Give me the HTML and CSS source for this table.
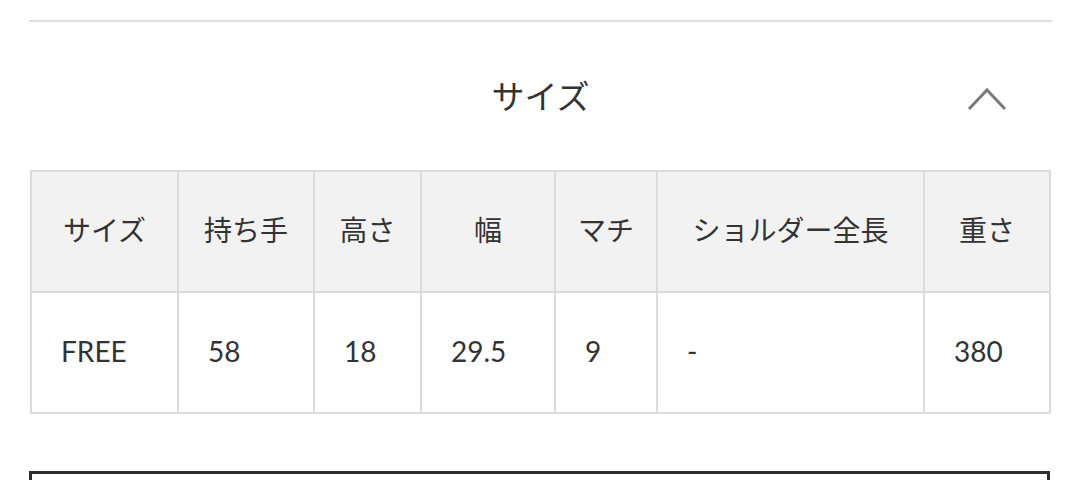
FILE: index.html
```html
<!DOCTYPE html>
<html lang="ja">
<head>
<meta charset="utf-8">
<link rel="stylesheet" href="styles.css">
</head>
<body>
<div class="page">
  <div class="rule"></div>
  <div class="acc-head">
    <span></span>
    <h2 class="acc-title">サイズ</h2>
    <svg class="chev" width="40" height="26" viewBox="0 0 40 26"><polyline points="2,24 20,5 38,24" fill="none" stroke="#7a7a7a" stroke-width="3"/></svg>
  </div>
  <table class="size">
    <colgroup>
      <col style="width:147px"><col style="width:136px"><col style="width:107px"><col style="width:134px"><col style="width:102px"><col style="width:267px"><col style="width:126px">
    </colgroup>
    <thead>
      <tr><th>サイズ</th><th>持ち手</th><th>高さ</th><th>幅</th><th>マチ</th><th>ショルダー全長</th><th>重さ</th></tr>
    </thead>
    <tbody>
      <tr><td>FREE</td><td>58</td><td>18</td><td>29.5</td><td>9</td><td>-</td><td>380</td></tr>
    </tbody>
  </table>
  <div class="next-box"></div>
</div>
</body>
</html>
```
FILE: styles.css
```css
html, body { margin: 0; padding: 0; background: #fff; }
body { font-family: Lato, "Noto Sans CJK JP", sans-serif; color: #333; overflow: hidden; height: 481px; }
.page { padding: 20px 28px 0 29px; }
.rule { height: 2px; background: #dedede; }
.acc-head {
  height: 148px;
  display: grid;
  grid-template-columns: 1fr auto 1fr;
  align-items: center;
}
.acc-title {
  margin: 0;
  font-family: "Noto Sans CJK JP", sans-serif;
  font-weight: 400;
  font-size: 33px;
  line-height: 1;
  color: #333;
  position: relative;
  top: -1px;
}
.chev { justify-self: end; margin-right: 45px; margin-top: 4px; }
.size {
  width: 1019px;
  margin-left: 1px;
  border-collapse: separate;
  border-spacing: 0;
  table-layout: fixed;
  border-top: 2px solid #dcdcdc;
  border-left: 2px solid #dcdcdc;
}
.size th, .size td {
  border-right: 2px solid #dcdcdc;
  border-bottom: 2px solid #dcdcdc;
  padding: 0;
  font-size: 28px;
  font-weight: 400;
  color: #333;
  box-sizing: border-box;
}
.size th {
  background: #f2f2f2;
  text-align: center;
  font-family: "Noto Sans CJK JP", sans-serif;
  height: 121px;
  padding-bottom: 6px;
}
.size td {
  text-align: left;
  padding-left: 29px;
  padding-bottom: 4px;
  background: #fff;
  height: 121px;
}
.next-box {
  margin-top: 57px;
  height: 6px;
  border: 3px solid #2e2e2e;
  border-bottom: none;
  width: 1015px;
}
```
